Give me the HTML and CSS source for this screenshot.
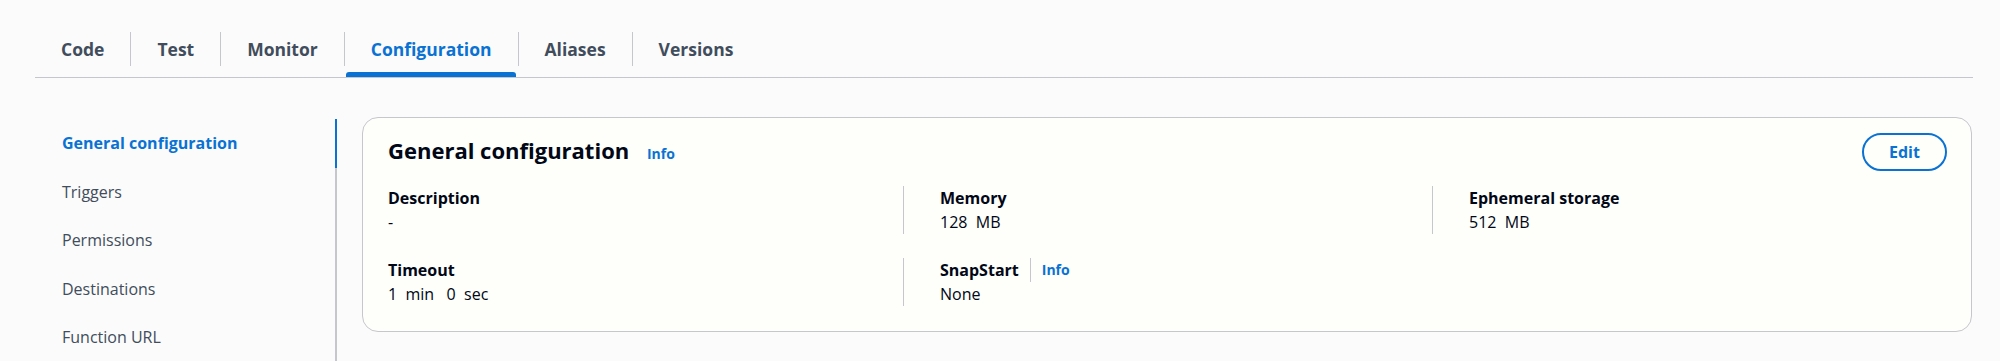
FILE: index.html
```html
<!DOCTYPE html>
<html lang="en">
<head>
    <meta charset="UTF-8">
    <meta name="viewport" content="width=device-width, initial-scale=1.0">
    <title>Function configuration</title>
    <link rel="stylesheet" href="styles.css">
</head>
<body>
    <div id="tabs">
        <div class="tab"><span class="tab-label">Code</span><span class="tab-bar"></span></div>
        <div class="tab"><span class="tab-label">Test</span><span class="tab-bar"></span></div>
        <div class="tab"><span class="tab-label">Monitor</span><span class="tab-bar"></span></div>
        <div class="tab active"><span class="tab-label">Configuration</span><span class="tab-bar"></span></div>
        <div class="tab"><span class="tab-label">Aliases</span><span class="tab-bar"></span></div>
        <div class="tab"><span class="tab-label">Versions</span><span class="tab-bar"></span></div>
    </div>

    <div id="main">
        <div id="side-nav">
            <div class="nav-item active">General configuration</div>
            <div class="nav-item">Triggers</div>
            <div class="nav-item">Permissions</div>
            <div class="nav-item">Destinations</div>
            <div class="nav-item">Function URL</div>
        </div>

        <div id="config-card">
            <div class="card-header">
                <h2>General configuration <a class="info-link">Info</a></h2>
                <button class="edit-btn">Edit</button>
            </div>
            <div class="details">
                <div class="cell">
                    <div class="label">Description</div>
                    <div class="value">-</div>
                </div>
                <div class="cell divided">
                    <div class="label">Memory</div>
                    <div class="value">128&nbsp; MB</div>
                </div>
                <div class="cell divided">
                    <div class="label">Ephemeral storage</div>
                    <div class="value">512&nbsp; MB</div>
                </div>
                <div class="cell">
                    <div class="label">Timeout</div>
                    <div class="value">1&nbsp; min&nbsp;&nbsp; 0&nbsp; sec</div>
                </div>
                <div class="cell divided">
                    <div class="label">SnapStart<span class="label-sep"></span><a class="info-link">Info</a></div>
                    <div class="value">None</div>
                </div>
            </div>
        </div>
    </div>
</body>
</html>
```

FILE: styles.css
```css
body {
    font-family: "Open Sans", "Noto Sans", Arial, sans-serif;
    background-color: #fbfbfb;
    color: #000716;
    margin: 0;
    padding: 0;
    overflow: hidden;
}
#tabs {
    display: flex;
    margin: 0 27px 0 35px;
    padding-top: 32px;
    border-bottom: 1px solid #c6c6cd;
}
.tab {
    display: flex;
    flex-direction: column;
}
.tab-label {
    padding: 0 26px;
    line-height: 34px;
    font-size: 17.5px;
    font-weight: 700;
    color: #414d5c;
}
.tab + .tab .tab-label {
    border-left: 1px solid #c6c6cd;
}
.tab-bar {
    height: 5px;
    margin: 6px 2px 0 2px;
    border-radius: 3px 3px 0 0;
}
.tab.active .tab-label {
    color: #0972d3;
}
.tab.active .tab-bar {
    background-color: #0972d3;
}
#main {
    display: flex;
    align-items: flex-start;
    margin: 0 28px 0 35px;
    padding-top: 39px;
    height: 244px;
}
#side-nav {
    width: 300px;
    flex-shrink: 0;
    margin-top: 2px;
    align-self: stretch;
    border-right: 2px solid #c6c6cd;
}
.nav-item {
    padding-left: 27px;
    line-height: 48.5px;
    font-size: 16px;
    color: #414d5c;
}
.nav-item.active {
    color: #0972d3;
    font-weight: 700;
    margin-right: -2px;
    border-right: 2px solid #0972d3;
}
#config-card {
    flex: 1;
    margin-left: 25px;
    padding: 15px 24px 25px 25px;
    background-color: #fefefa;
    border: 1px solid #c6c6cd;
    border-radius: 16px;
}
.card-header {
    display: flex;
    align-items: center;
    justify-content: space-between;
    height: 38px;
}
.card-header h2 {
    margin: 0;
    font-size: 22px;
    font-weight: 700;
    line-height: 30px;
}
.info-link {
    color: #0972d3;
    font-size: 14px;
    font-weight: 700;
    margin-left: 12px;
}
.edit-btn {
    width: 85px;
    height: 38px;
    border: 2px solid #0972d3;
    border-radius: 20px;
    background-color: transparent;
    color: #0972d3;
    font-family: inherit;
    font-size: 16px;
    font-weight: 700;
    cursor: pointer;
}
.details {
    display: grid;
    grid-template-columns: repeat(3, 1fr);
    row-gap: 24px;
    margin: 15px -14px 0 -14px;
}
.cell {
    padding-left: 14px;
    font-size: 16px;
    line-height: 24px;
}
.cell.divided {
    border-left: 1px solid #c6c6cd;
    padding-left: 36px;
}
.label {
    display: flex;
    align-items: center;
    font-weight: 700;
}
.label .info-link {
    margin-left: 0;
}
.label-sep {
    width: 1px;
    height: 24px;
    margin: 0 11px;
    background-color: #c6c6cd;
}
```
